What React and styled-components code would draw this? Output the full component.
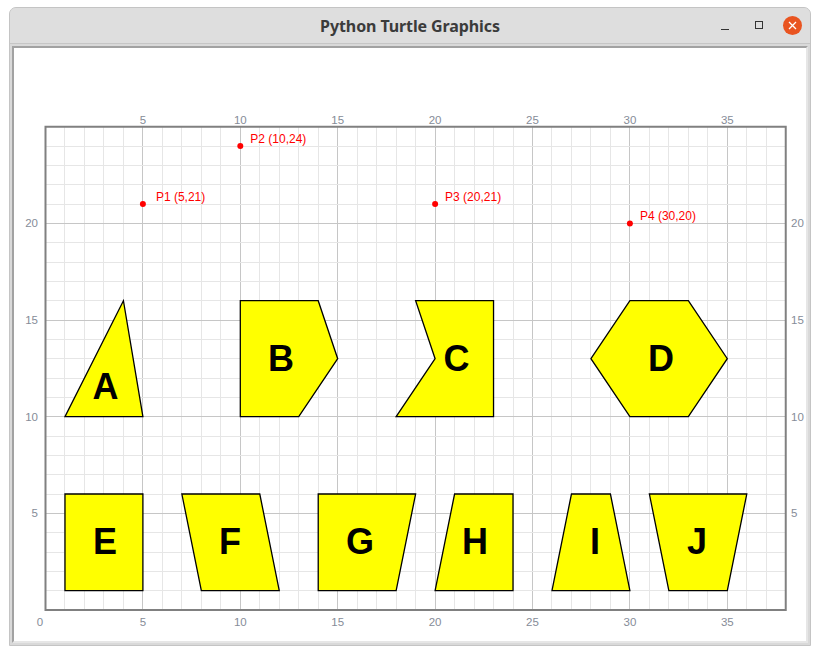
import React from "react";
import styled, { createGlobalStyle } from "styled-components";

const GlobalStyle = createGlobalStyle`
  html, body {
    margin: 0;
    padding: 0;
    background: #ffffff;
  }
  body {
    font-family: "Liberation Sans", Arial, sans-serif;
  }
`;

const Page = styled.div`
  width: 820px;
  height: 655px;
  padding: 7px 0 0 9px;
  box-sizing: border-box;
`;

const Window = styled.div`
  width: 802px;
  height: 639px;
  box-sizing: border-box;
  border: 1px solid #c4c4c4;
  border-radius: 7px 7px 0 0;
  background: #d9d9d9;
  display: flex;
  flex-direction: column;
  overflow: hidden;
`;

const TitleBar = styled.div`
  height: 35px;
  flex: none;
  background: #dedede;
  border-bottom: 1px solid #c6c6c6;
  display: grid;
  grid-template-columns: 1fr auto 1fr;
  align-items: center;
`;

const Title = styled.div`
  grid-column: 2;
  font-family: "Noto Sans", "DejaVu Sans", sans-serif;
  font-weight: 700;
  font-size: 16px;
  color: #3b3b3b;
  letter-spacing: -0.1px;
  padding-top: 1px;
`;

const Controls = styled.div`
  grid-column: 3;
  justify-self: end;
  display: flex;
  align-items: center;
  padding-right: 8px;
`;

const ControlButton = styled.div`
  width: 34px;
  height: 24px;
  display: flex;
  align-items: center;
  justify-content: center;
`;

const MinimizeGlyph = styled.div`
  width: 8px;
  height: 1.5px;
  background: #333;
  margin-top: 8px;
`;

const MaximizeGlyph = styled.div`
  width: 6px;
  height: 6px;
  border: 1.5px solid #333;
  margin-top: -1px;
`;

const CloseButton = styled.div`
  width: 19px;
  height: 19px;
  border-radius: 50%;
  background: #e95420;
  display: flex;
  align-items: center;
  justify-content: center;
  margin-left: 7px;
`;

const Body = styled.div`
  flex: 1;
  padding: 2px;
  display: flex;
`;

const Canvas = styled.div`
  width: 792px;
  height: 593px;
  background: #ffffff;
  border-style: solid;
  border-width: 2px;
  border-color: #a2a2a2 #e6e6e6 #e6e6e6 #a2a2a2;
`;

const Plot = styled.svg`
  display: block;
  width: 792px;
  height: 593px;
`;

const X = (u) => 45.5 + u * 19.48;
const Y = (v) => 610 - v * 19.33;

const shapes = [
  { id: "A", pts: [[1, 10], [5, 10], [4, 16]], lx: 105.5, ly: 386 },
  { id: "B", pts: [[10, 10], [10, 16], [14, 16], [15, 13], [13, 10]], lx: 281, ly: 358 },
  { id: "C", pts: [[19, 16], [23, 16], [23, 10], [18, 10], [20, 13]], lx: 456.5, ly: 358 },
  { id: "D", pts: [[28, 13], [30, 16], [33, 16], [35, 13], [33, 10], [30, 10]], lx: 661, ly: 358 },
  { id: "E", pts: [[1, 1], [5, 1], [5, 6], [1, 6]], lx: 105, ly: 541 },
  { id: "F", pts: [[8, 1], [12, 1], [11, 6], [7, 6]], lx: 230, ly: 541 },
  { id: "G", pts: [[14, 1], [18, 1], [19, 6], [14, 6]], lx: 360, ly: 541 },
  { id: "H", pts: [[20, 1], [24, 1], [24, 6], [21, 6]], lx: 475, ly: 541 },
  { id: "I", pts: [[26, 1], [30, 1], [29, 6], [27, 6]], lx: 595, ly: 541 },
  { id: "J", pts: [[32, 1], [35, 1], [36, 6], [31, 6]], lx: 697, ly: 541 },
];

const points = [
  { name: "P1", x: 5, y: 21, dx: 13 },
  { name: "P2", x: 10, y: 24, dx: 10 },
  { name: "P3", x: 20, y: 21, dx: 10 },
  { name: "P4", x: 30, y: 20, dx: 10 },
];

const xTicks = [5, 10, 15, 20, 25, 30, 35];
const yTicks = [5, 10, 15, 20];
const tickColor = "#868c98";
const tickFont = { fontFamily: "Liberation Sans, Arial, sans-serif", fontSize: 11.5 };

function Grid() {
  const lines = [];
  for (let u = 1; u < 38; u++) {
    lines.push(
      <line
        key={"v" + u}
        x1={X(u)}
        x2={X(u)}
        y1={Y(25)}
        y2={Y(0)}
        stroke={u % 5 === 0 ? "#c6c6c6" : "#e6e6e6"}
        strokeWidth="1"
      />
    );
  }
  for (let v = 1; v < 25; v++) {
    lines.push(
      <line
        key={"h" + v}
        x1={X(0)}
        x2={X(38)}
        y1={Y(v)}
        y2={Y(v)}
        stroke={v % 5 === 0 ? "#c6c6c6" : "#e6e6e6"}
        strokeWidth="1"
      />
    );
  }
  return <g shapeRendering="crispEdges">{lines}</g>;
}

function Ticks() {
  return (
    <g fill={tickColor} {...tickFont}>
      {xTicks.map((u) => (
        <text key={"t" + u} x={X(u)} y={124} textAnchor="middle">
          {u}
        </text>
      ))}
      <text x={40} y={626} textAnchor="middle">0</text>
      {xTicks.map((u) => (
        <text key={"b" + u} x={X(u)} y={626} textAnchor="middle">
          {u}
        </text>
      ))}
      {yTicks.map((v) => (
        <text key={"l" + v} x={38} y={Y(v) + 4} textAnchor="end">
          {v}
        </text>
      ))}
      {yTicks.map((v) => (
        <text key={"r" + v} x={791} y={Y(v) + 4} textAnchor="start">
          {v}
        </text>
      ))}
    </g>
  );
}

function Shapes() {
  return (
    <g>
      {shapes.map((s) => (
        <g key={s.id}>
          <polygon
            points={s.pts.map(([u, v]) => `${X(u)},${Y(v)}`).join(" ")}
            fill="#ffff00"
            stroke="#000000"
            strokeWidth="1.3"
          />
          <text
            x={s.lx}
            y={s.ly + 13}
            textAnchor="middle"
            fontFamily="Liberation Sans, Arial, sans-serif"
            fontWeight="700"
            fontSize="36"
            fill="#000000"
          >
            {s.id}
          </text>
        </g>
      ))}
    </g>
  );
}

function Points() {
  return (
    <g>
      {points.map((p) => (
        <g key={p.name}>
          <circle cx={X(p.x)} cy={Y(p.y)} r="3" fill="#ff0000" />
          <text
            x={X(p.x) + p.dx}
            y={Y(p.y) - 3}
            fill="#ff0000"
            fontFamily="Liberation Sans, Arial, sans-serif"
            fontSize="12"
          >
            {`${p.name} (${p.x},${p.y})`}
          </text>
        </g>
      ))}
    </g>
  );
}

export default function App() {
  return (
    <Page>
      <GlobalStyle />
      <Window>
        <TitleBar>
          <Title>Python Turtle Graphics</Title>
          <Controls>
            <ControlButton>
              <MinimizeGlyph />
            </ControlButton>
            <ControlButton>
              <MaximizeGlyph />
            </ControlButton>
            <CloseButton>
              <svg width="9" height="9" viewBox="0 0 9 9">
                <path d="M1 1 L8 8 M8 1 L1 8" stroke="#ffffff" strokeWidth="1.3" />
              </svg>
            </CloseButton>
          </Controls>
        </TitleBar>
        <Body>
          <Canvas>
            <Plot viewBox="14 48 792 593">
              <Grid />
              <rect
                x={X(0)}
                y={Y(25)}
                width={X(38) - X(0)}
                height={Y(0) - Y(25)}
                fill="none"
                stroke="#808080"
                strokeWidth="2"
              />
              <Ticks />
              <Shapes />
              <Points />
            </Plot>
          </Canvas>
        </Body>
      </Window>
    </Page>
  );
}
